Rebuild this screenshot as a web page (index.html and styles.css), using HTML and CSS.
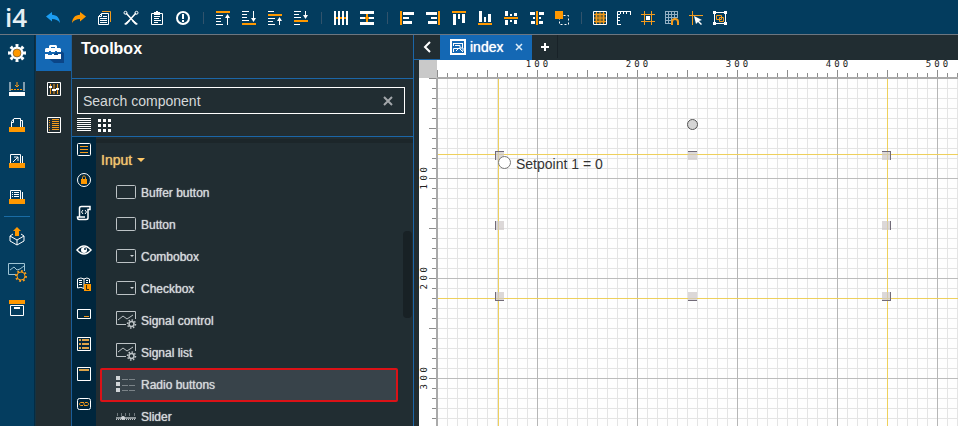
FILE: index.html
```html
<!DOCTYPE html>
<html lang="en">
<head>
<meta charset="utf-8">
<title>i4 designer</title>
<link rel="stylesheet" href="styles.css">
</head>
<body>
<div class="app">
<header class="topbar">
  <span class="logo">i4</span>
  <button class="tool" aria-label="Undo"><svg viewBox="0 0 16 16"><path fill="#1b9df2" d="M1 6.500 7 2v2.800c5 .2 7.500 3.200 8 8.200-2-3-4.500-4-8-4v2.500z"/></svg></button>
  <button class="tool" aria-label="Redo"><svg viewBox="0 0 16 16"><path class="o" d="M15 6.500 9 2v2.800C4 5 1.500 8 1 13c2-3 4.500-4 8-4v2.500z"/></svg></button>
  <button class="tool" aria-label="Copy"><svg viewBox="0 0 16 16"><path class="ol" d="M5 1.500h8.500V12"/><path class="wl" d="M4.500 3.500H11.500V14.500H1.500V6.500zM4.500 3.500V6.500H1.500M6 6.500h4M3 8.500h7M3 10.500h7M3 12.500h7"/></svg></button>
  <button class="tool" aria-label="Cut"><svg viewBox="0 0 16 16"><path class="wl" stroke-width="1.500" d="M3 3 12.500 13.500M13 3 3.500 13.500"/><circle class="wl" cx="2.500" cy="2.800" r="1.500"/><circle class="wl" cx="13.500" cy="2.800" r="1.500"/><path class="w" d="M10 10l5 4-2 1-4-4zM6 10l-5 4 2 1 4-4z"/></svg></button>
  <button class="tool" aria-label="Paste"><svg viewBox="0 0 16 16"><path class="wl" d="M5 3.500H2.500V14.500H13.500V3.500H11M5 6.500h6M5 8.500h5M5 10.500h7M5 12.500h4"/><path class="w" d="M5 2h2V1h2v1h2v3H5z"/></svg></button>
  <button class="tool" aria-label="Information"><svg viewBox="0 0 16 16"><circle class="wl wide" cx="8" cy="8" r="6"/><path class="w" d="M7 4h2v5H7zM7 10h2v2H7z"/></svg></button>
  <i class="sep"></i>
  <button class="tool" aria-label="Bring to front"><svg viewBox="0 0 16 16"><path class="o" d="M1 1h14v2H1z"/><path class="wl" d="M1 5.500h7M1 8.500h5M1 11.500h5M1 14.500h7M12.500 15V6"/><path class="w" d="M12.500 4 15 8H10z"/></svg></button>
  <button class="tool" aria-label="Send to back"><svg viewBox="0 0 16 16"><path class="o" d="M1 13h14v2H1z"/><path class="wl" d="M1 1.500h7M1 4.500h5M1 7.500h5M1 10.500h7M12.500 1v9"/><path class="w" d="M12.500 12 15 8H10z"/></svg></button>
  <button class="tool" aria-label="Move up"><svg viewBox="0 0 16 16"><path class="o" d="M1 4h14v2H1z"/><path class="wl" d="M1 1.500h6M1 8.500h7M1 11.500h5M1 14.500h7M12.500 15V9"/><path class="w" d="M12.500 7 15 11H10z"/></svg></button>
  <button class="tool" aria-label="Move down"><svg viewBox="0 0 16 16"><path class="o" d="M1 10h14v2H1z"/><path class="wl" d="M1 1.500h7M1 4.500h5M1 7.500h7M1 14.500h6M12.500 1v5"/><path class="w" d="M12.500 9 15 5H10z"/></svg></button>
  <i class="sep"></i>
  <button class="tool" aria-label="Distribute horizontally"><svg viewBox="0 0 16 16"><path class="w" d="M1 1h2v14H1zM5 1h2v14H5zM9 1h2v14H9zM13 1h2v14h-2z"/><path class="o" d="M3 7h2v2H3zM7 7h2v2H7zM11 7h2v2h-2z"/></svg></button>
  <button class="tool" aria-label="Distribute vertically"><svg viewBox="0 0 16 16"><path class="w" d="M1 1h14v3H1zM1 7h5v2H1zM10 7h5v2h-5zM1 12h14v3H1z"/><path class="o" d="M7 4h2v3H7zM7 9h2v3H7zM6 7h4v2H6z"/></svg></button>
  <i class="sep"></i>
  <button class="tool" aria-label="Align left"><svg viewBox="0 0 16 16"><path class="o" d="M1 1h2v14H1z"/><path class="w" d="M4 2h11v3H4zM4 7h6v2H4zM4 11h9v3H4z"/></svg></button>
  <button class="tool" aria-label="Align right"><svg viewBox="0 0 16 16"><path class="o" d="M13 1h2v14h-2z"/><path class="w" d="M1 2h11v3H1zM6 7h6v2H6zM3 11h9v3H3z"/></svg></button>
  <button class="tool" aria-label="Align top"><svg viewBox="0 0 16 16"><path class="o" d="M1 1h14v2H1z"/><path class="w" d="M2 4h3v11H2zM7 4h2v5H7zM11 4h3v9h-3z"/></svg></button>
  <button class="tool" aria-label="Align bottom"><svg viewBox="0 0 16 16"><path class="o" d="M1 13h14v2H1z"/><path class="w" d="M2 1h3v11H2zM7 7h2v5H7zM11 4h3v8h-3z"/></svg></button>
  <button class="tool" aria-label="Align middle"><svg viewBox="0 0 16 16"><path class="o" d="M1 7h14v2H1z"/><path class="w" d="M2 1h3v5H2zM2 10h3v5H2zM7 4h2v2H7zM7 10h2v2H7zM11 3h3v3h-3zM11 10h3v4h-3z"/></svg></button>
  <button class="tool" aria-label="Align center"><svg viewBox="0 0 16 16"><path class="o" d="M7 1h2v14H7z"/><path class="w" d="M1 2h5v3H1zM10 2h5v3h-5zM4 7h2v2H4zM10 7h2v2h-2zM2 11h4v3H2zM10 11h4v3h-4z"/></svg></button>
  <button class="tool slim" aria-label="Group"><svg viewBox="0 0 16 16"><path class="wl" stroke-dasharray="2 2" d="M5.500 5.500H14.500V14.500H5.500z"/><path class="o" d="M1 1h8v8H1z"/></svg></button>
  <i class="sep"></i>
  <button class="tool slim" aria-label="Show grid"><svg viewBox="0 0 16 16"><path fill="#7d6629" d="M3 3h10v10H3z"/><path class="ol" d="M2 4.500h12M2 8h12M2 11.500h12M4.500 2v12M8 2v12M11.500 2v12"/><path class="wl" d="M1.500 1.500h13v13h-13z"/></svg></button>
  <button class="tool slim" aria-label="Show rulers"><svg viewBox="0 0 16 16"><path class="wl" d="M15 1.500H1.500V15M4.500 2v2M7.500 2v2M10.500 2v2M14.500 2v3M2 4.500h2M2 7.500h2M2 10.500h2M2 14.500h3"/></svg></button>
  <button class="tool slim" aria-label="Snap"><svg viewBox="0 0 16 16"><path class="ol" d="M4.500 1v14M11.500 1v14M1 4.500h14M1 11.500h14"/><path class="w" d="M6 6h4v4H6z"/></svg></button>
  <button class="tool slim" aria-label="Snap to grid"><svg viewBox="0 0 16 16"><path stroke="#94b0c4" fill="none" d="M1.500 1v13M4.500 1v13M7.500 1v13M10.500 1v8M13.500 1v7M1 1.500h13M1 4.500h13M1 7.500h13M1 10.500h7M1 13.500h7"/><path class="ol wide" d="M8 15v-3c0-4 6-4 6 0v3"/></svg></button>
  <button class="tool slim" aria-label="Guides"><svg viewBox="0 0 16 16"><path class="ol" d="M4.500 1v14M1 5.500h14"/><path class="w" d="M6 6l8 4-3 1 3 3-1 1-3-3-2 2z"/></svg></button>
  <button class="tool slim" aria-label="Fit selection"><svg viewBox="0 0 16 16"><path class="wl" d="M2.500 2.500h11v11h-11z"/><path class="w" d="M1 1h3v3H1zM12 1h3v3h-3zM1 12h3v3H1zM12 12h3v3h-3z"/><path class="ol" d="M4.500 5.500h5v4h-5zM7.500 7.500h4v4h-4z"/></svg></button>
</header>

<div class="work">
<nav class="rail" aria-label="Main">
  <button aria-label="Settings"><svg class="i18" viewBox="0 0 18 18"><circle fill="none" stroke="#fff" stroke-width="3" pathLength="16" stroke-dasharray="1 1" stroke-dashoffset=".5" cx="9" cy="9" r="7.500"/><circle class="w" cx="9" cy="9" r="6.500"/><circle class="o" cx="9" cy="9" r="4" stroke="#333" stroke-width=".5"/></svg></button>
  <button aria-label="Import"><svg viewBox="0 0 16 16"><path class="wl" d="M1 1v9M15 1v9"/><path class="w" d="M0 11h16v4H0z"/><path fill="none" stroke="#ff9800" stroke-dasharray="2 1" d="M2 8.500h12"/><path class="ol" d="M8 1v5M6 4l2 2 2-2"/></svg></button>
  <button aria-label="Open"><svg viewBox="0 0 16 16"><path class="wl" d="M2.500 10V4.500L5 1.500h6.500V10M12 3.500h1.500V10M2.500 5.500h2V2"/><path class="o" d="M0 10h16v5H0z"/></svg></button>
  <button aria-label="Export"><svg viewBox="0 0 16 16"><path class="wl" d="M1.500 10V1.500h10V10M13.500 3v7M4 9l5-5M5 4h4v4"/><path class="o" d="M0 10h16v5H0z"/></svg></button>
  <button aria-label="Documents"><svg viewBox="0 0 16 16"><path class="wl" d="M1.500 10V1.500h10V10M13.500 3v7M3 3.500h1M3 5.500h1M3 7.500h1M5 3.500h5M5 5.500h5M5 7.500h5"/><path class="o" d="M0 10h16v5H0z"/></svg></button>
  <hr>
  <button aria-label="Publish"><svg class="i18" viewBox="0 0 18 18"><path class="wl" d="M5 7 2 9v5l7 4 7-4V9l-3-2M2 9l7 4 7-4M9 13v5"/><path class="o" d="M9 0l4 4h-2v5H7V4H5z"/></svg></button>
  <button aria-label="Signals"><svg class="i18" viewBox="0 0 18 18"><path fill="none" stroke="#9ec3d3" d="M8 11.500H.5v-11h16V8M2 7l4-3 3 3 3-1 4-3"/><circle class="ol" cx="13" cy="13" r="4"/><circle fill="none" stroke="#f49b1c" stroke-width="2" pathLength="16" stroke-dasharray="1 1" cx="13" cy="13" r="5"/></svg></button>
  <button aria-label="Archive"><svg viewBox="0 0 16 16"><path class="o" d="M0 0h16v4H0z"/><path class="wl" d="M1.500 5.500h13v10h-13z"/><path class="w" d="M5 7h6v2H5z"/></svg></button>
</nav>
<nav class="rail second" aria-label="Panels">
  <button class="on" aria-label="Toolbox"><svg class="i20" viewBox="0 0 20 20"><path fill="#0b4587" d="M16 7l4 3v10H10l-6-5z"/><path class="w" d="M5 5V3l1-1h6l1 1v2h3l1 1v3h-4V8h-2v1H7V8H5v1H1V6l1-1zM7 5h4V4H7zM1 11h3v1h4v-1h2v1h4v-1h3v5H1z"/><path fill="none" stroke="#1468b4" d="M1 10h4M7 10h4M13 10h4"/></svg></button>
  <button aria-label="Properties"><svg viewBox="0 0 16 16"><path class="wl" d="M1.500 1.500h13v13h-13z"/><path class="ol" d="M4.500 3v10M8 3v10M11.500 3v10"/><path class="w" d="M3 5h3v2H3zM6 8h4v2H6zM10 7h3v2h-3z"/></svg></button>
  <button aria-label="Outline"><svg class="i18" viewBox="0 0 18 18"><path class="wl" d="M2.500 1.500h13v15h-13z"/><path class="ol" d="M4 4.500h1M4 6.500h1M4 9h1M4 11.500h1M4 14h1M7 3.500h7M7 5.500h7M7 7.500h7M7 9.500h7M7 11.500h7M7 13.500h7"/></svg></button>
</nav>

<aside class="toolbox">
  <h1>Toolbox</h1>
  <div class="finder">
    <div class="search"><input type="text" aria-label="Search component" placeholder="Search component"><button aria-label="Clear search"><svg viewBox="0 0 8 8"><path fill="none" stroke="#a3a7aa" stroke-width="2" d="M0 0l8 8M8 0 0 8"/></svg></button></div>
    <div class="views">
      <button aria-label="List view"><svg class="i14" viewBox="0 0 14 14"><path class="wl" d="M0 .5h14M0 2.500h14M0 4.500h14M0 6.500h14M0 8.500h14M0 10.500h14M0 12.500h14"/></svg></button>
      <button aria-label="Grid view"><svg class="i14" viewBox="0 0 14 14"><path class="w" d="M1 1h3v3H1zM6 1h3v3H6zM11 1h3v3h-3zM1 6h3v3H1zM6 6h3v3H6zM11 6h3v3h-3zM1 11h3v3H1zM6 11h3v3H6zM11 11h3v3h-3z"/></svg></button>
    </div>
  </div>
  <div class="library">
    <nav class="cats" aria-label="Categories">
      <button aria-label="Text"><svg viewBox="0 0 16 16"><rect class="wl" x="1.500" y="1.500" width="13" height="12" rx="1"/><path class="ol" d="M4 4.500h8M4 7.500h8M4 10.500h8"/></svg></button>
      <button aria-label="Security"><svg viewBox="0 0 16 16"><circle class="wl" cx="8" cy="8" r="6.500"/><path class="o" d="M5 7h6v5H5z"/><path class="ol" d="M6.500 7V5.500c0-2 3-2 3 0V7"/></svg></button>
      <button class="mid" aria-label="Script"><svg viewBox="0 0 16 16"><path class="wl" stroke-width="1.500" d="M3.500 12V3c0-1 1-1.500 2-1.500h8.500v3h-2V13c0 1-1 1.500-2 1.500H3c-1 0-1.500-1-1.500-2.500H9"/><path class="wl" d="M7 5 5.500 7 7 9M9 5l1.500 2L9 9"/></svg></button>
      <button class="tall" aria-label="Visibility"><svg viewBox="0 0 16 16"><path class="wl" stroke-width="1.500" d="M1 8q7-8 14 0-7 8-14 0z"/><circle class="w" cx="8" cy="8" r="3"/><circle fill="#00263d" cx="9" cy="7" r="1"/></svg></button>
      <button aria-label="Localization"><svg viewBox="0 0 16 16"><path class="wl" d="M8 3q-3-2-6.500 0v9Q5 10.500 8 12.500M8 3q3-2 5.500 0v4M8 3v9M3 4.500h3M3 6.500h3M3 8.500h3M10 4.500h2M10 6.500h2"/><path class="o" d="M8 8h7v7H8z"/><path fill="none" stroke="#3b2b12" d="M10.500 9v4.500H13"/></svg></button>
      <button aria-label="Input"><svg viewBox="0 0 16 16"><path class="wl" d="M1.500 3.500h13v9h-13z"/><path class="ol" d="M8 10.500h5"/></svg></button>
      <button aria-label="Lists"><svg viewBox="0 0 16 16"><path class="wl" d="M1.500 1.500h13v13h-13z"/><path fill="#dca449" d="M3 3h2v2H3zM6 3h7v2H6zM3 7h2v2H3zM6 7h7v2H6zM3 11h2v2H3zM6 11h7v2H6z"/></svg></button>
      <button aria-label="Containers"><svg viewBox="0 0 16 16"><path class="wl" d="M1.500 1.500h13v13h-13z"/><path fill="#dca449" d="M3 3h10v2H3z"/></svg></button>
      <button aria-label="Links"><svg viewBox="0 0 16 16"><rect class="wl" x="1.500" y="2.500" width="13" height="11" rx="2"/><path class="ol" d="M8 6.500H5c-2 0-2 3 0 3h2M9 6.500h2c2 0 2 3 0 3H8M7 8h2"/></svg></button>
    </nav>
    <section class="list">
      <button class="group">Input <i class="caret"></i></button>
      <button class="item"><svg class="comp" viewBox="0 0 20 14"><rect x=".5" y=".5" width="19" height="13" rx="1"/></svg>Buffer button</button>
      <button class="item"><svg class="comp" viewBox="0 0 20 14"><rect x=".5" y=".5" width="19" height="13" rx="1"/></svg>Button</button>
      <button class="item"><svg class="comp" viewBox="0 0 20 14"><rect x=".5" y=".5" width="19" height="13" rx="1"/><path class="fill" d="M14 6h4l-2 2z"/></svg>Combobox</button>
      <button class="item"><svg class="comp" viewBox="0 0 20 14"><rect x=".5" y=".5" width="19" height="13" rx="1"/><path class="fill" d="M14 6h4l-2 2z"/></svg>Checkbox</button>
      <button class="item"><svg class="comp sig" viewBox="0 0 20 18"><path d="M10 13.500H.5V.5h19V8M2 9l5-4 4 3 6-4"/><circle cx="15.500" cy="13" r="2.500" stroke-width="1.500"/><circle cx="15.500" cy="13" r="4" pathLength="16" stroke-width="1.500" stroke-dasharray="1 1"/></svg>Signal control</button>
      <button class="item"><svg class="comp sig" viewBox="0 0 20 18"><path d="M10 13.500H.5V.5h19V8M2 9l5-4 4 3 6-4"/><circle cx="15.500" cy="13" r="2.500" stroke-width="1.500"/><circle cx="15.500" cy="13" r="4" pathLength="16" stroke-width="1.500" stroke-dasharray="1 1"/></svg>Signal list</button>
      <button class="item picked"><svg class="comp sig" viewBox="0 0 20 18"><path class="fill" d="M0 1h4v4H0zM0 7h4v4H0zM0 13h4v4H0z"/><path stroke-dasharray="6 1" opacity=".5" d="M6 4.500h14M6 10.500h14M6 15.500h14"/></svg>Radio buttons</button>
      <button class="item"><svg class="comp" viewBox="0 0 20 14"><path stroke-width="2" opacity=".7" d="M0 9h20"/><path stroke-dasharray="1 1" d="M0 10.500h20"/><path opacity=".5" d="M1.500 4v3M5.500 4v3M9.500 4v3M13.500 4v3M18.500 4v3"/><circle class="fill" cx="7" cy="9" r="2"/></svg>Slider</button>
      <i class="thumb"></i>
    </section>
  </div>
</aside>

<main class="editor">
  <div class="tabs">
    <button class="prev" aria-label="Previous tab"><svg class="i10" viewBox="0 0 10 10"><path class="wl wide" d="M8 0 3 5l5 5"/></svg></button>
    <div class="tab"><svg viewBox="0 0 16 16"><path class="wl wide" d="M1 1h14v14H1z"/><path class="wl" d="M3 4.500h10M3.500 7V5M12.500 5v4M5 6.500h5v3H3.500V13M6 12l3-3 4 4M10 9h3v3"/></svg><a href="#index">index</a><button aria-label="Close index"><svg viewBox="0 0 6 6"><path fill="none" stroke="#dcecf8" stroke-width="1.500" d="M0 0l6 6M6 0 0 6"/></svg></button></div>
    <button class="add" aria-label="New tab"><svg viewBox="0 0 8 8"><path class="w" d="M3 0h2v3h3v2H5v3H3V5H0V3h3z"/></svg></button>
  </div>
  <div class="stage">
    <div class="corner"></div>
    <div class="ruler across"><div class="nums">
      <span><b>1</b><b>0</b><b>0</b></span><span><b>2</b><b>0</b><b>0</b></span><span><b>3</b><b>0</b><b>0</b></span><span><b>4</b><b>0</b><b>0</b></span><span><b>5</b><b>0</b><b>0</b></span>
    </div></div>
    <div class="ruler down"><div class="nums">
      <span><b>1</b><b>0</b><b>0</b></span><span><b>2</b><b>0</b><b>0</b></span><span><b>3</b><b>0</b><b>0</b></span>
    </div></div>
    <div class="canvas">
      <div class="guides-v"></div>
      <div class="guides-h"></div>
      <div class="selection">
        <i class="handle n w"></i><i class="handle n c"></i><i class="handle n e"></i>
        <i class="handle m w"></i><i class="handle m e"></i>
        <i class="handle s w"></i><i class="handle s c"></i><i class="handle s e"></i>
        <i class="rotate"></i>
        <label class="setpoint"><input type="radio" name="setpoint">Setpoint 1 = 0</label>
      </div>
    </div>
  </div>
</main>
</div>
</div>
</body>
</html>
```
FILE: styles.css
```css
* { box-sizing: border-box; }
body { margin: 0; font: 14px/16px "Liberation Sans", Arial, sans-serif; color: #fff; }
button { border: 0; padding: 0; margin: 0; background: none; color: inherit; font: inherit; display: flex; align-items: center; justify-content: center; }
svg { display: block; width: 16px; height: 16px; flex: none; overflow: visible; }
.w { fill: #fff; }
.o { fill: #ff9800; }
.wl { fill: none; stroke: #fff; }
.ol { fill: none; stroke: #f49b1c; }
.wide { stroke-width: 2; }
.i10 { width: 10px; height: 10px; }
.i14 { width: 14px; height: 14px; }
.i18 { width: 18px; height: 18px; }
.i20 { width: 20px; height: 20px; }

.app { display: flex; flex-direction: column; height: 100vh; overflow: hidden; }
.topbar { display: flex; align-items: stretch; flex: none; height: 35px; background: #033c5e; border-bottom: 1px solid #6d7680; }
.logo { width: 40px; padding-left: 5px; font: 600 26px/34px "Open Sans", sans-serif; color: #e6eef3; }
.tool { width: 26px; height: 36px; }
.tool.slim { width: 24px; }
.sep { width: 14px; display: flex; justify-content: center; align-items: center; }
.sep::after { content: ""; width: 1px; height: 12px; background: #31536c; margin-top: 2px; }

.work { display: flex; flex: 1; min-height: 0; }
.rail { width: 35px; flex: none; background: #043d5f; border-right: 1px solid #032c45; }
.rail button { width: 33px; height: 36px; }
.rail hr { border: 0; border-top: 1px solid #1a6ca5; margin: 1px 4px; }
.rail.second { width: 37px; background: #212d32; border-right: 1px solid #1b5e9a; border-left: 1px solid #17323f; }
.rail.second button { width: 35px; }
.rail.second .on { background: #1468b4; }

.toolbox { width: 342px; flex: none; display: flex; flex-direction: column; background: #212d32; border-right: 1px solid #1b66a8; }
h1 { margin: 0; height: 44px; padding: 5px 9px; font-size: 16px; line-height: 17px; border-bottom: 1px solid #1b66a8; }
.finder { padding: 8px 8px 4px 5px; height: 58px; border-bottom: 1px solid #1b66a8; }
.search { display: flex; border: 1px solid #fff; height: 27px; }
.search input { flex: 1; min-width: 0; border: 0; padding: 0 5px; background: none; color: #fff; font: inherit; outline: 0; }
.search input::placeholder { color: #d6d9da; opacity: 1; }
.search button { width: 32px; }
.search svg { width: 8px; height: 8px; }
.views { display: flex; gap: 6px; padding-top: 4px; }
.library { display: flex; flex: 1; min-height: 0; }
.cats { width: 24px; flex: none; background: #00263d; }
.cats button { width: 24px; height: 30px; margin-top: -2px; margin-bottom: 2px; }
.cats .mid { height: 36px; }
.cats .tall { height: 38px; }
.list { position: relative; flex: 1; min-width: 0; padding: 6px 0; background: linear-gradient(#212d32 2px, #1c262a 2px, #1c262a 6px, #212d32 6px); }
.group { height: 34px; padding-left: 5px; gap: 5px; color: #f2c46d; text-shadow: 0 0 1px #f2c46d; }
.caret { border: 4px solid transparent; border-top-color: #ffc766; border-bottom: 0; }
.item { width: 298px; height: 32px; margin-left: 4px; padding-left: 16px; gap: 5px; justify-content: flex-start; font-size: 12px; color: #d5d9db; text-shadow: 0 0 1px #d5d9db; }
.picked { height: 34px; margin-top: -1px; margin-bottom: -1px; padding-left: 14px; background: #38434a; border: 2px solid #db1217; border-radius: 2px; }
.comp { width: 20px; height: 14px; fill: none; stroke: #bdc3c6; margin-top: -2px; }
.comp.sig { height: 18px; }
.comp .fill { fill: #d1d5d8; stroke: none; }
.thumb { position: absolute; right: 1px; top: 94px; width: 9px; height: 87px; border-radius: 4px; background: #182125; }

.editor { flex: 1; min-width: 0; display: flex; flex-direction: column; background: #212d32; }
.tabs { display: flex; flex: none; height: 25px; background: linear-gradient(#1b66a8, #1b66a8) 0 24px / 26px 1px no-repeat; }
.prev { width: 26px; height: 24px; }
.tab { display: flex; align-items: center; padding: 0 8px 2px 10px; gap: 4px; background: #1468b4; }
.tab a { color: #fff; text-decoration: none; text-shadow: 0 0 1px #fff; padding-right: 7px; }
.tab button { width: 10px; }
.tab button svg { width: 6px; height: 6px; }
.add { width: 26px; height: 23px; border-right: 1px solid #182228; }
.add svg { width: 8px; height: 8px; }

.stage { flex: 1; min-height: 0; margin-left: 5px; display: grid; grid-template: 18px minmax(0, 1fr) / 18px minmax(0, 1fr); background: #fff; color: #222; }
.corner { background: #c9c9c9; }
.ruler { overflow: hidden; }
.across { background: linear-gradient(#aaa, #aaa) 0 17px / 100% 1px no-repeat, repeating-linear-gradient(90deg, #8d8d8d 0 1px, transparent 1px 50px) 0 10px / 100% 8px no-repeat, repeating-linear-gradient(90deg, #8d8d8d 0 1px, transparent 1px 10px) 0 13px / 100% 5px no-repeat, #fff; }
.down { background: linear-gradient(#aaa, #aaa) 17px 0 / 1px 100% no-repeat, repeating-linear-gradient(180deg, #8d8d8d 0 1px, transparent 1px 50px) 10px 0 / 8px 100% no-repeat, repeating-linear-gradient(180deg, #8d8d8d 0 1px, transparent 1px 10px) 13px 0 / 5px 100% no-repeat, #fff; }
.nums { display: flex; font: 9px/9px "DejaVu Sans Mono", monospace; }
.nums span { display: flex; flex: none; gap: 3px; justify-content: center; }
.nums b { font-weight: 400; }
.across .nums { margin-left: 50px; }
.across span { width: 100px; }
.down .nums { flex-direction: column; margin-top: 50px; }
.down span { height: 100px; width: 10px; flex-direction: column-reverse; }
.down b { writing-mode: vertical-rl; transform: rotate(180deg); line-height: 10px; }

.canvas { position: relative; overflow: hidden; border-top: 1px solid #aaa; border-left: 1px solid #aaa; background:
  repeating-linear-gradient(90deg, transparent 0 99px, #b6b6b6 99px 100px),
  repeating-linear-gradient(180deg, transparent 0 99px, #bcbcbc 99px 100px),
  repeating-linear-gradient(90deg, transparent 0 9px, #e4e4e4 9px 10px),
  repeating-linear-gradient(180deg, transparent 0 9px, #e4e4e4 9px 10px), #fefefe; }
.guides-v, .guides-h { position: absolute; border: 0 solid #eed05c; }
.guides-v { left: 60px; top: 0; bottom: 0; width: 390px; border-left-width: 1px; border-right-width: 1px; }
.guides-h { top: 75px; left: 0; right: 0; height: 145px; border-top-width: 1px; border-bottom-width: 1px; }
.selection { position: absolute; left: 57px; top: 72px; width: 396px; height: 150px; }
.handle { position: absolute; width: 9px; height: 9px; background: rgba(205, 200, 200, .7); border: 0 solid #716b78; }
.handle.n { top: 0; border-top-width: 1px; }
.handle.m { top: 70px; }
.handle.s { bottom: 0; border-bottom-width: 1px; }
.handle.w { left: 0; border-left-width: 1px; }
.handle.c { left: 193px; }
.handle.e { right: 0; border-right-width: 1px; }
.rotate { position: absolute; left: 192px; top: -32px; width: 11px; height: 11px; border-radius: 50%; background: #d5d5d5; border: 1px solid #555; }
.setpoint { position: absolute; left: 3px; top: 5px; display: flex; align-items: center; gap: 5px; color: #333; line-height: 17px; }
.setpoint input { appearance: none; width: 13px; height: 13px; margin: 0 0 4px; border: 1px solid #777; border-radius: 50%; background: #fff; }
```
